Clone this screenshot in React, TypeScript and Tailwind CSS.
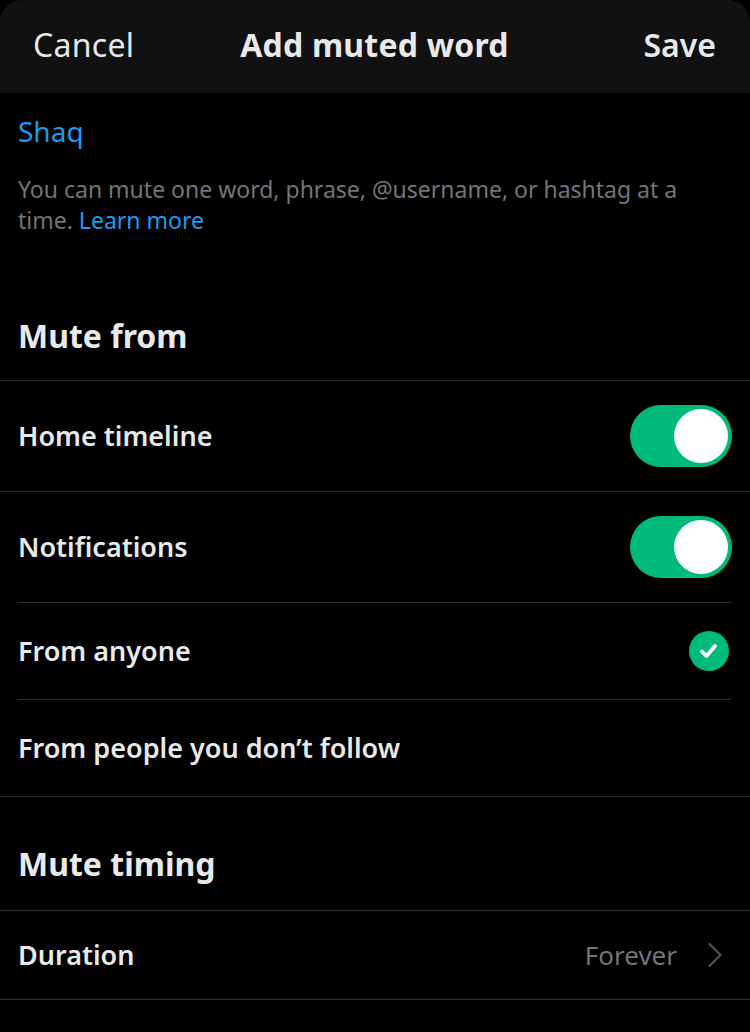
const Toggle = () => (
  <div className="w-[102px] h-[62px] rounded-full bg-[#00ba7c] flex items-center justify-end pr-[4px]">
    <div className="w-[54px] h-[54px] rounded-full bg-white" />
  </div>
);

const Check = () => (
  <div className="w-[40px] h-[40px] rounded-full bg-[#00ba7c] flex items-center justify-center mr-[3px]">
    <svg viewBox="0 0 24 24" className="w-[24px] h-[24px]" fill="none" stroke="white" strokeWidth="3.8" strokeLinecap="round" strokeLinejoin="round">
      <path d="M5 12.5l4.5 4.5 8.5-10" />
    </svg>
  </div>
);

const Row = ({ label, right, h }: { label: string; right?: React.ReactNode; h: string }) => (
  <div className={`flex items-center justify-between pl-[18px] pr-[18px] ${h}`}>
    <span className="text-[27px] font-semibold text-[#e7e9ea]">{label}</span>
    {right}
  </div>
);

export default function App() {
  return (
    <div className="w-[750px] h-[1032px] bg-black overflow-hidden" style={{ fontFamily: '"Noto Sans", "Liberation Sans", sans-serif' }}>
      {/* Header */}
      <div className="h-[93px] bg-[#111111] rounded-t-[22px] grid grid-cols-[1fr_auto_1fr] items-center pl-[33px] pr-[34px] pb-[4px]">
        <span className="text-[32px] text-[#e7e9ea] tracking-[0.3px]">Cancel</span>
        <span className="text-[32px] font-bold text-[#e7e9ea] tracking-[0.2px]">Add muted word</span>
        <span className="text-[32px] font-semibold text-[#e7e9ea] justify-self-end">Save</span>
      </div>

      {/* Word input */}
      <div className="px-[18px] pt-[19px]">
        <div className="text-[28px] text-[#1d9bf0] leading-[38px]">Shaq</div>
        <p className="mt-[24px] text-[23px] leading-[31px] text-[#71767b]">
          You can mute one word, phrase, @username, or hashtag at a time. <span className="text-[#1d9bf0]">Learn more</span>
        </p>
      </div>

      {/* Mute from */}
      <div className="px-[18px] pt-[80px] pb-[24px]">
        <h2 className="text-[32px] font-bold text-[#e7e9ea] leading-[40px]">Mute from</h2>
      </div>
      <div className="border-t border-[#2f3336]">
        <Row label="Home timeline" h="h-[110px]" right={<Toggle />} />
        <div className="border-t border-[#2f3336]" />
        <Row label="Notifications" h="h-[110px]" right={<Toggle />} />
        <div className="ml-[18px] mr-[19px] border-t border-[#2f3336]" />
        <Row label="From anyone" h="h-[96px]" right={<Check />} />
        <div className="ml-[18px] mr-[19px] border-t border-[#2f3336]" />
        <Row label="From people you don’t follow" h="h-[96px]" />
      </div>

      {/* Mute timing */}
      <div className="border-t border-[#2f3336] px-[18px] pt-[45px] pb-[24px]">
        <h2 className="text-[32px] font-bold text-[#e7e9ea] leading-[44px]">Mute timing</h2>
      </div>
      <div className="border-t border-[#2f3336]">
        <div className="flex items-center justify-between pl-[18px] pr-[27px] h-[88px]">
          <span className="text-[27px] font-semibold text-[#e7e9ea]">Duration</span>
          <div className="flex items-center gap-[30px]">
            <span className="text-[26px] text-[#71767b]">Forever</span>
            <svg viewBox="0 0 16 26" className="w-[16px] h-[26px]" fill="none" stroke="#4e5256" strokeWidth="2.2" strokeLinecap="round" strokeLinejoin="round">
              <path d="M2.5 2l11 11-11 11" />
            </svg>
          </div>
        </div>
      </div>
      <div className="border-t border-[#2f3336]" />
    </div>
  );
}
